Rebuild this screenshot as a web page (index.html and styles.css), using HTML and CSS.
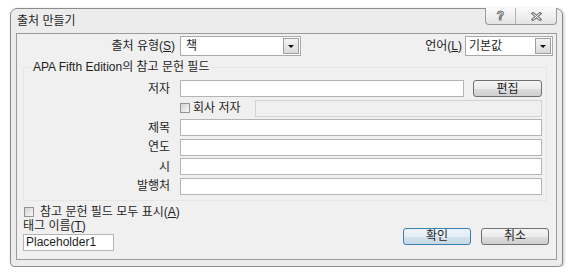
FILE: index.html
```html
<!DOCTYPE html>
<html lang="ko">
<head>
    <meta charset="UTF-8">
    <title>출처 만들기</title>
    <link rel="stylesheet" href="styles.css">
</head>
<body>
    <div class="dialog">
        <div class="caption-buttons">
            <span class="cap-help">?</span>
            <span class="cap-close">
                <svg width="11" height="9" viewBox="0 0 11 9">
                    <path d="M2 1.5 L9 7.5 M9 1.5 L2 7.5" stroke="#7a7a7a" stroke-width="3" stroke-linecap="square"/>
                    <path d="M2 1.5 L9 7.5 M9 1.5 L2 7.5" stroke="#fff" stroke-width="1"/>
                </svg>
            </span>
        </div>

        <div class="titlebar">출처 만들기</div>

        <div class="client">
            <!-- 출처 유형 / 언어 -->
            <div class="top-row">
                <span class="top-label">출처 유형(<u>S</u>)</span>
                <div class="select type-select">
                    <span>책</span>
                    <span class="drop"><i></i></span>
                </div>
                <span class="spacer"></span>
                <span>언어(<u>L</u>)</span>
                <div class="select lang-select">
                    <span>기본값</span>
                    <span class="drop"><i></i></span>
                </div>
            </div>

            <fieldset class="group">
                <legend>APA Fifth Edition의 참고 문헌 필드</legend>
                <div class="fields">
                    <label>저자</label>
                    <div class="field-with-btn">
                        <div class="textbox"></div>
                        <button class="btn edit-btn">편집</button>
                    </div>

                    <span></span>
                    <div class="corp-row">
                        <span class="checkbox"></span>
                        <span class="corp-text">회사 저자</span>
                        <div class="textbox disabled"></div>
                    </div>

                    <label>제목</label>
                    <div class="textbox"></div>

                    <label>연도</label>
                    <div class="textbox"></div>

                    <label>시</label>
                    <div class="textbox"></div>

                    <label>발행처</label>
                    <div class="textbox"></div>
                </div>
            </fieldset>

            <div class="bottom">
                <div class="bottom-left">
                    <div class="check-row">
                        <span class="checkbox"></span>
                        <span class="check-text">참고 문헌 필드 모두 표시(<u>A</u>)</span>
                    </div>
                    <div class="tag-label">태그 이름(<u>T</u>)</div>
                    <div class="textbox tag-box">Placeholder1</div>
                </div>
                <div class="actions">
                    <button class="btn ok-btn">확인</button>
                    <button class="btn">취소</button>
                </div>
            </div>
        </div>
    </div>
</body>
</html>
```

FILE: styles.css
```css
body {
    margin: 0;
    background: #fff;
    font-family: "Liberation Sans", "Noto Sans CJK KR", sans-serif;
    font-size: 12px;
    line-height: 14px;
    color: #1e1e1e;
}
u {
    text-decoration: underline;
    text-underline-offset: 1px;
}

/* 창 프레임 */
.dialog {
    position: relative;
    box-sizing: border-box;
    width: 553px;
    height: 259px;
    margin: 8px 0 0 10px;
    padding: 0 5px 6px 5px;
    border: 1px solid #8c8c8c;
    border-radius: 7px 7px 5px 5px;
    background: #ececec;
    box-shadow: 1px 1px 3px rgba(0, 0, 0, 0.25);
}
.titlebar {
    height: 24px;
    line-height: 24px;
    padding-left: 1px;
}
.caption-buttons {
    position: absolute;
    top: -1px;
    right: 5px;
    display: flex;
    height: 16px;
    border: 1px solid #9a9a9a;
    border-top: none;
    border-radius: 0 0 4px 4px;
    background: linear-gradient(#fafafa, #e4e4e4);
}
.cap-help,
.cap-close {
    display: flex;
    align-items: center;
    justify-content: center;
}
.cap-help {
    width: 29px;
    border-right: 1px solid #b4b4b4;
    font-size: 12px;
    font-weight: bold;
    color: #fff;
    -webkit-text-stroke: 1px #777;
}
.cap-close {
    width: 40px;
}

/* 클라이언트 영역 */
.client {
    box-sizing: border-box;
    height: 227px;
    border: 1px solid #9b9b9b;
    background: #f0f0f0;
}
.top-row {
    display: flex;
    align-items: center;
    height: 20px;
    margin-top: 2px;
    padding-right: 3px;
}
.top-label {
    width: 158px;
    text-align: right;
}
.spacer {
    flex: 1;
}
.select {
    box-sizing: border-box;
    display: flex;
    align-items: center;
    justify-content: space-between;
    height: 20px;
    border: 1px solid #a9a9a9;
    background: #fff;
}
.type-select {
    width: 121px;
    margin-left: 5px;
    padding: 0 1px 0 5px;
}
.lang-select {
    width: 88px;
    margin-left: 3px;
    padding: 0 1px 0 3px;
}
.drop {
    box-sizing: border-box;
    display: flex;
    align-items: center;
    justify-content: center;
    width: 16px;
    height: 16px;
    border: 1px solid #9e9e9e;
    background: linear-gradient(#f4f4f4, #dadada);
}
.drop i {
    width: 0;
    height: 0;
    border-left: 3px solid transparent;
    border-right: 3px solid transparent;
    border-top: 3px solid #111;
}

/* 참고 문헌 필드 */
.group {
    margin: 4px 9px 0 6px;
    padding: 0 0 5px 0;
    border: 1px solid #e6e6e6;
}
.group legend {
    height: 14px;
    line-height: 14px;
    margin-left: 6px;
    padding: 0 3px;
}
.fields {
    display: grid;
    grid-template-columns: 146px 1fr;
    grid-template-rows: repeat(6, 17px);
    column-gap: 10px;
    row-gap: 2.5px;
    margin-top: 6px;
    padding-right: 4px;
}
.fields label {
    align-self: center;
    text-align: right;
}
.textbox {
    box-sizing: border-box;
    height: 17px;
    border: 1px solid #b4b4b4;
    background: #fff;
}
.textbox.disabled {
    flex: 1;
    border-color: #d2d2d2;
    background: #f0f0f0;
}
.field-with-btn {
    display: flex;
}
.field-with-btn .textbox {
    flex: 1;
}
.edit-btn {
    width: 69px;
    height: 16px;
    margin-left: 9px;
}
.corp-row {
    display: flex;
    align-items: center;
}
.corp-text {
    width: 62px;
    margin-left: 3px;
}
.checkbox {
    box-sizing: border-box;
    width: 10px;
    height: 10px;
    border: 1px solid #939393;
    background: linear-gradient(135deg, #d4d4d4, #f8f8f8);
}

/* 버튼 */
.btn {
    box-sizing: border-box;
    height: 17px;
    padding: 0;
    border: 1px solid #707070;
    border-radius: 3px;
    background: linear-gradient(#f4f4f4 0%, #ebebeb 50%, #dddddd 51%, #cfcfcf 100%);
    font-family: inherit;
    font-size: 12px;
    line-height: 14px;
    color: #1e1e1e;
}

/* 아래 영역 */
.bottom {
    display: flex;
    justify-content: space-between;
    padding: 0 7px 0 6px;
}
.check-row {
    display: flex;
    align-items: center;
    height: 13px;
    margin-top: 5px;
}
.check-row .checkbox {
    margin: 0 6px 0 1px;
}
.check-text {
    line-height: 13px;
}
.tag-label {
    height: 13px;
    margin-top: 1px;
    line-height: 13px;
}
.tag-box {
    width: 91px;
    margin-top: 1px;
    padding-left: 2px;
    line-height: 15px;
}
.actions {
    display: flex;
    align-self: flex-end;
    gap: 10px;
    margin-bottom: 6px;
}
.actions .btn {
    width: 68px;
}
.ok-btn {
    border-color: #3c7fb1;
    background: linear-gradient(#eef5fa 0%, #e2edf4 50%, #d3e2ec 51%, #c8d9e4 100%);
}
```
